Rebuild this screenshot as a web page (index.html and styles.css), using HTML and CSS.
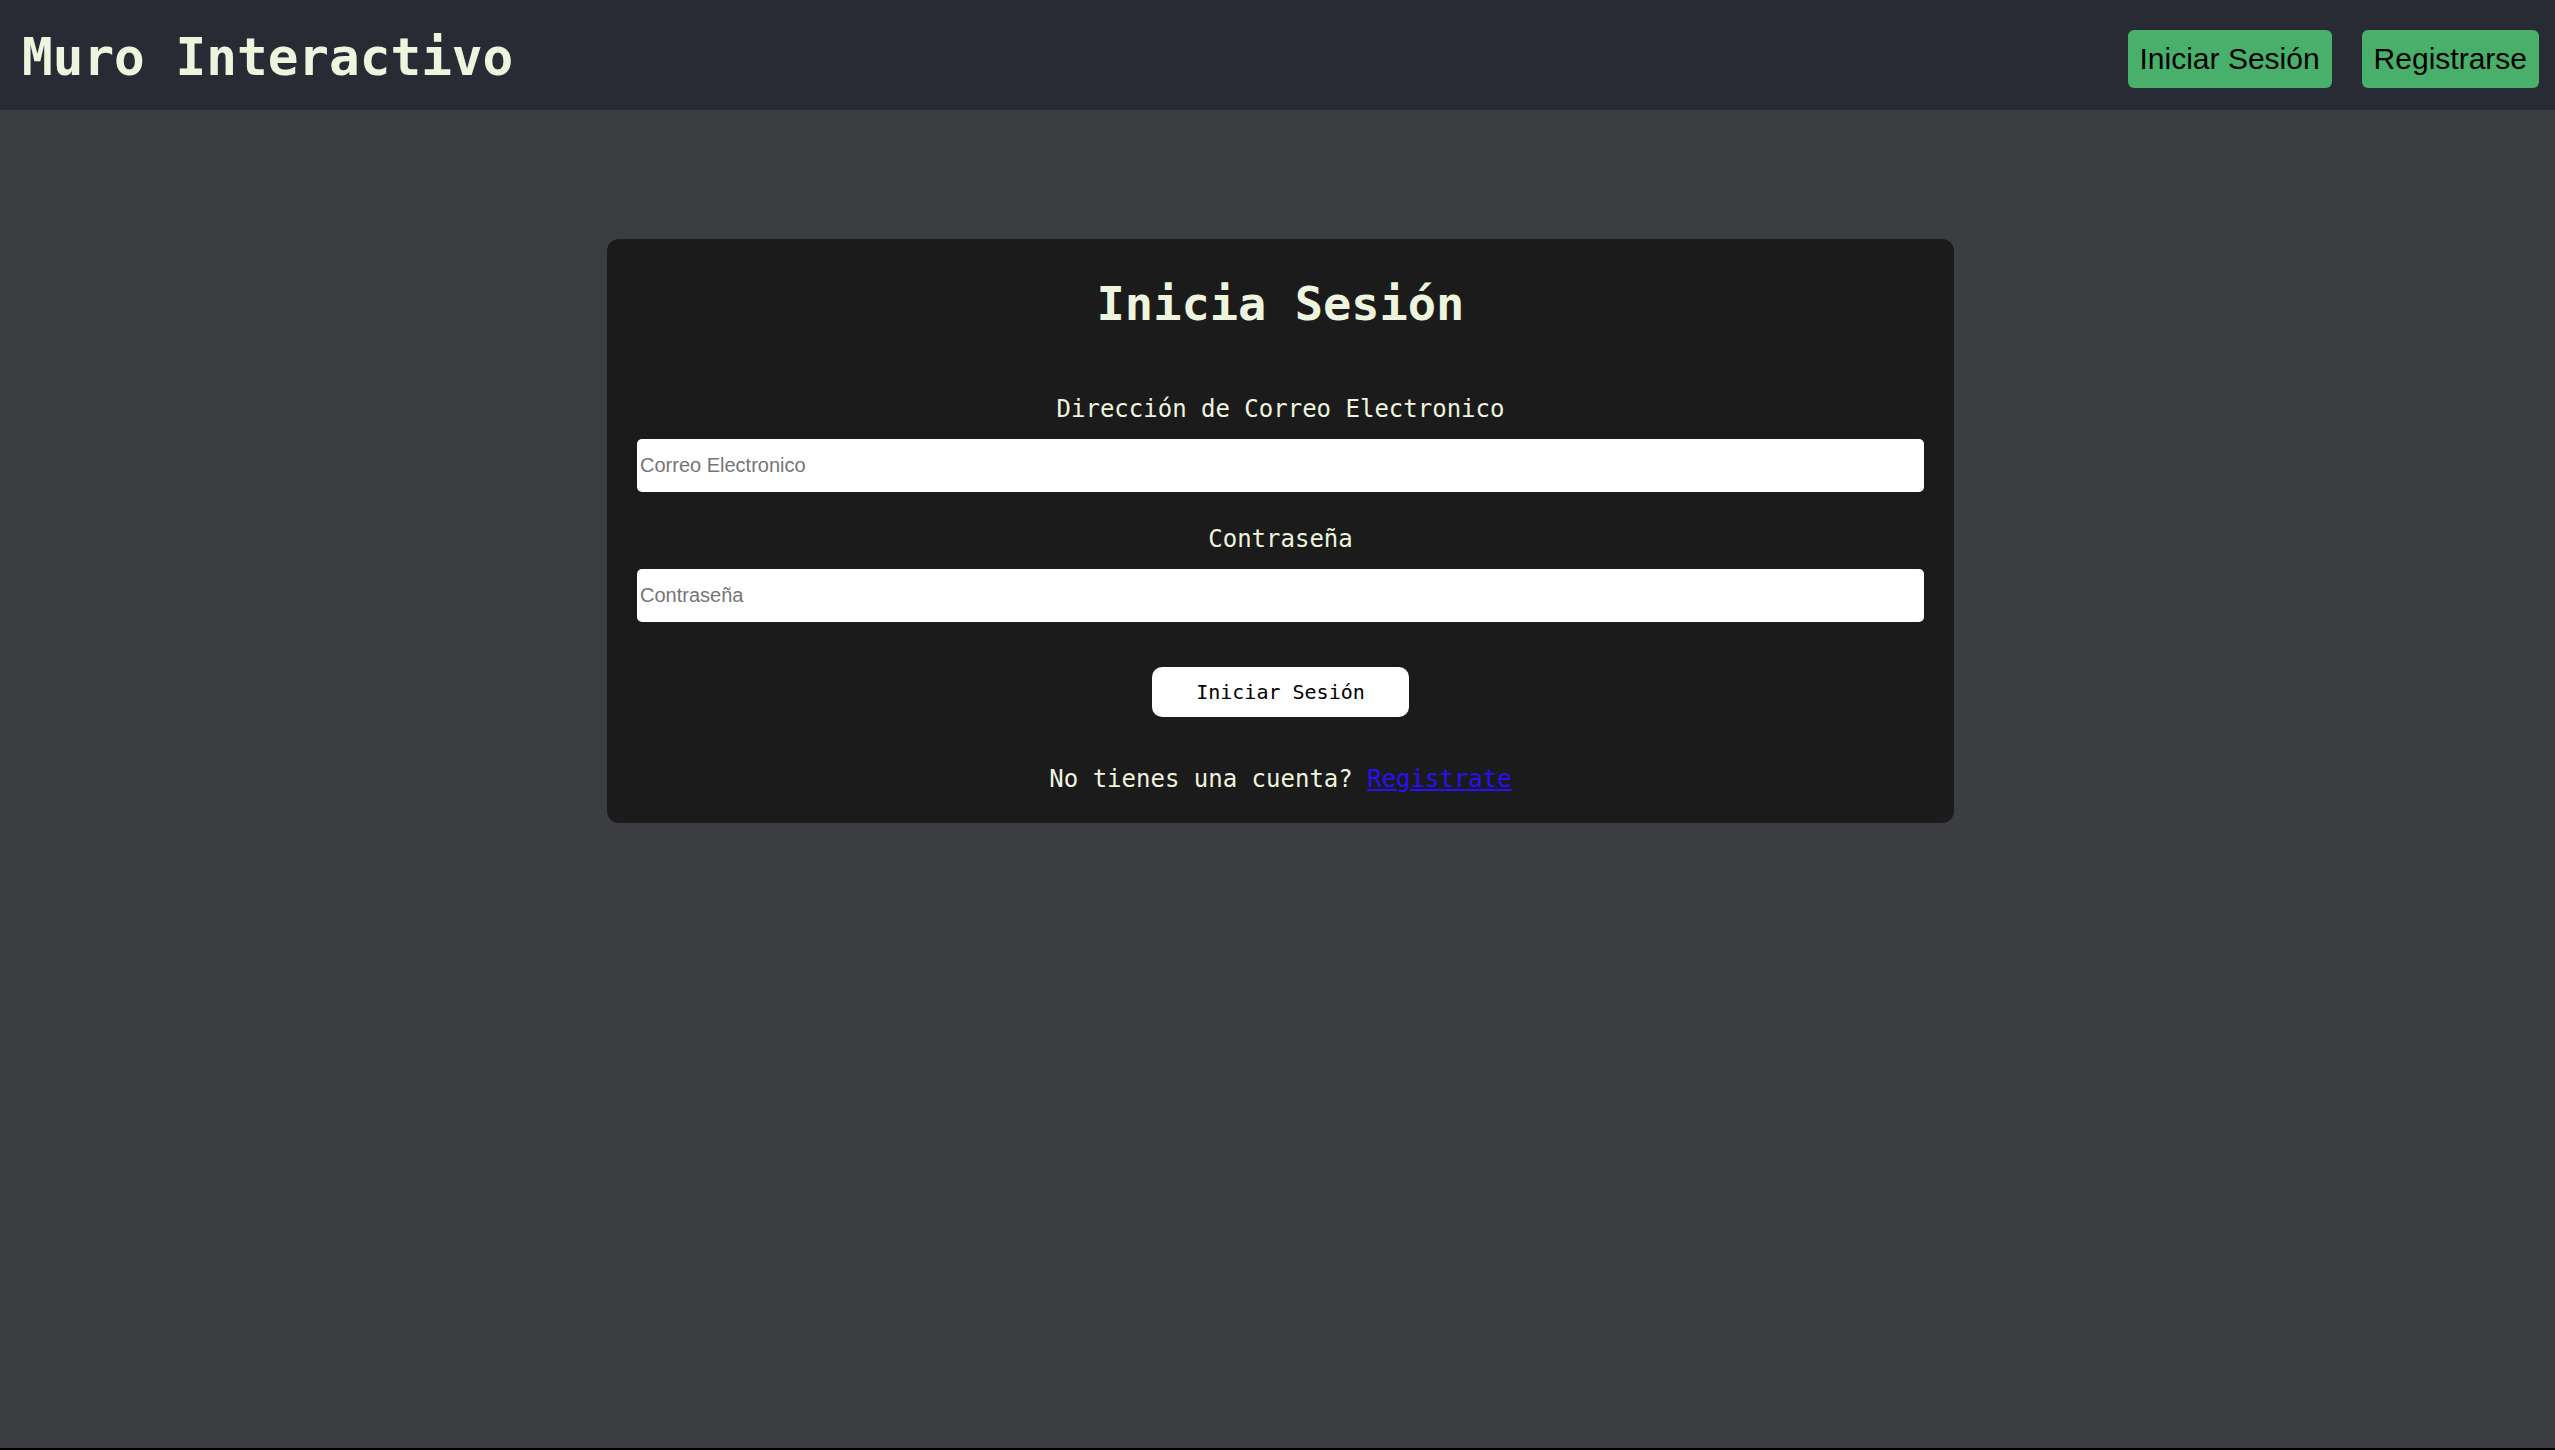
FILE: index.html
```html
<!DOCTYPE html>
<html lang="es">
<head>
<meta charset="utf-8">
<title>Muro Interactivo</title>
<link rel="stylesheet" href="styles.css">
</head>
<body>
<header class="topbar">
  <h1 class="brand">Muro Interactivo</h1>
  <nav class="nav">
    <a class="nav-btn" href="#">Iniciar Sesión</a>
    <a class="nav-btn" href="#">Registrarse</a>
  </nav>
</header>
<main class="main">
  <form class="card">
    <h2 class="card-title">Inicia Sesión</h2>
    <label class="field-label label-first" for="email">Dirección de Correo Electronico</label>
    <input class="field-input" id="email" type="email" placeholder="Correo Electronico">
    <label class="field-label" for="pass">Contraseña</label>
    <input class="field-input" id="pass" type="password" placeholder="Contraseña">
    <button class="submit" type="button">Iniciar Sesión</button>
    <p class="alt">No tienes una cuenta? <a class="alt-link" href="#">Registrate</a></p>
  </form>
</main>
</body>
</html>
```

FILE: styles.css
```css
html {
  background: #000;
  margin: 0;
  padding: 0;
}

body {
  margin: 0;
  min-height: 1448px;
  background: #3c3d40;
  font-family: "DejaVu Sans Mono", "Liberation Mono", monospace;
  color: #eef5df;
}

.topbar {
  height: 110px;
  background: #282b34;
  display: flex;
  align-items: center;
  justify-content: space-between;
  padding: 0 16px 0 22px;
  box-sizing: border-box;
}

.brand {
  margin: 0;
  font-size: 51px;
  line-height: 60px;
  font-weight: bold;
  color: #eef5df;
  position: relative;
  top: 3px;
}

.nav {
  display: flex;
  gap: 30px;
  align-items: center;
  position: relative;
  top: 4px;
}

.nav-btn {
  display: flex;
  align-items: center;
  height: 58px;
  padding: 0 12px;
  background: #48b06a;
  color: #000;
  border-radius: 6px;
  font-family: "Liberation Sans", Arial, sans-serif;
  font-size: 30px;
  text-decoration: none;
}

.main {
  display: flex;
  justify-content: center;
  padding: 129px 0 0 6px;
}

.card {
  width: 1347px;
  box-sizing: border-box;
  background: #1b1b1b;
  border-radius: 12px;
  padding: 36px 30px 29px 30px;
  display: flex;
  flex-direction: column;
  align-items: stretch;
  text-align: center;
}

.card-title {
  margin: 0;
  font-size: 47px;
  line-height: 58px;
  font-weight: bold;
  color: #eef5df;
}

.field-label {
  display: block;
  font-size: 24px;
  line-height: 30px;
  color: #eef5df;
  margin-top: 32px;
  margin-bottom: 15px;
}

.label-first {
  margin-top: 61px;
}

.field-input {
  display: block;
  width: 100%;
  height: 53px;
  box-sizing: border-box;
  border: none;
  border-radius: 5px;
  background: #fff;
  padding: 0 3px;
  font-family: "Liberation Sans", Arial, sans-serif;
  font-size: 20px;
  color: #000;
  outline: none;
}

.field-input::placeholder {
  color: #757575;
}

.submit {
  align-self: center;
  margin-top: 45px;
  width: 257px;
  height: 50px;
  border: none;
  border-radius: 10px;
  background: #fff;
  color: #000;
  font-family: "DejaVu Sans Mono", "Liberation Mono", monospace;
  font-size: 20px;
  cursor: pointer;
}

.alt {
  margin: 47px 0 0;
  font-size: 24px;
  line-height: 30px;
  color: #eef5df;
}

.alt-link {
  color: #2b0ff5;
}
```
